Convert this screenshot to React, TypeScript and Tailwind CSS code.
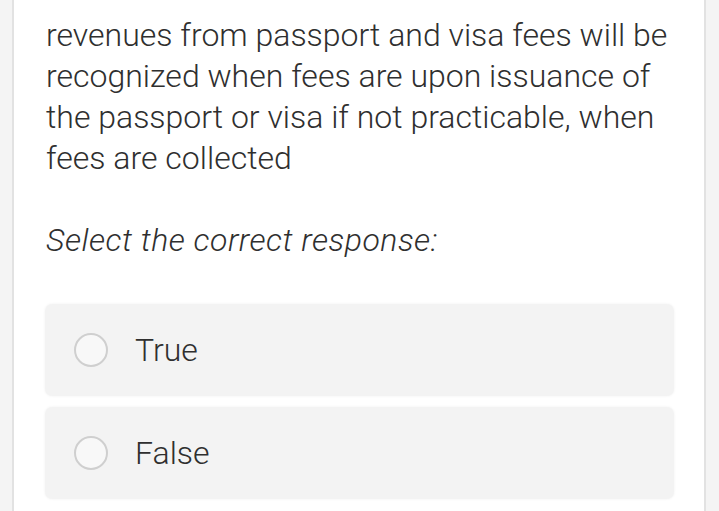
import React, { useState } from 'react'

export default function App() {
  const [answer, setAnswer] = useState<string | null>(null)
  const options = ['True', 'False']

  return (
    <div
      className="flex h-[511px] w-[719px] overflow-hidden bg-white text-[#2f2f2f]"
      style={{ fontFamily: 'Roboto, "Liberation Sans", sans-serif' }}
    >
      <div className="w-[14px] shrink-0 border-r-2 border-[#e2e2e2] bg-[#f4f4f4]" />
      <div className="flex flex-1 flex-col pl-[32px] pr-[30px] pt-[15px]">
        <p className="text-[32px] font-light leading-[41px]">
          revenues from passport and visa fees will be recognized when fees are upon issuance of the
          passport or visa if not practicable, when fees are collected
        </p>
        <p className="mt-[41px] text-[32px] font-light italic leading-[41px] tracking-[0.5px]">Select the correct response:</p>
        <div className="mt-[43px] flex flex-col gap-[11px]">
          {options.map((opt) => (
            <button
              key={opt}
              onClick={() => setAnswer(opt)}
              className="-ml-px flex h-[92px] items-center gap-[27px] rounded-[7px] bg-[#f3f3f3] pl-[29px] text-left shadow-[0_0_3px_rgba(0,0,0,0.06)]"
            >
              <span className="flex h-[34px] w-[34px] items-center justify-center rounded-full border-2 border-[#cfcfcf] bg-[#f8f8f8]">
                {answer === opt && <span className="h-[18px] w-[18px] rounded-full bg-[#5a5a5a]" />}
              </span>
              <span className="text-[32px] font-light">{opt}</span>
            </button>
          ))}
        </div>
      </div>
      <div className="w-[15px] shrink-0 border-l-2 border-[#e2e2e2] bg-[#f4f4f4]" />
    </div>
  )
}
